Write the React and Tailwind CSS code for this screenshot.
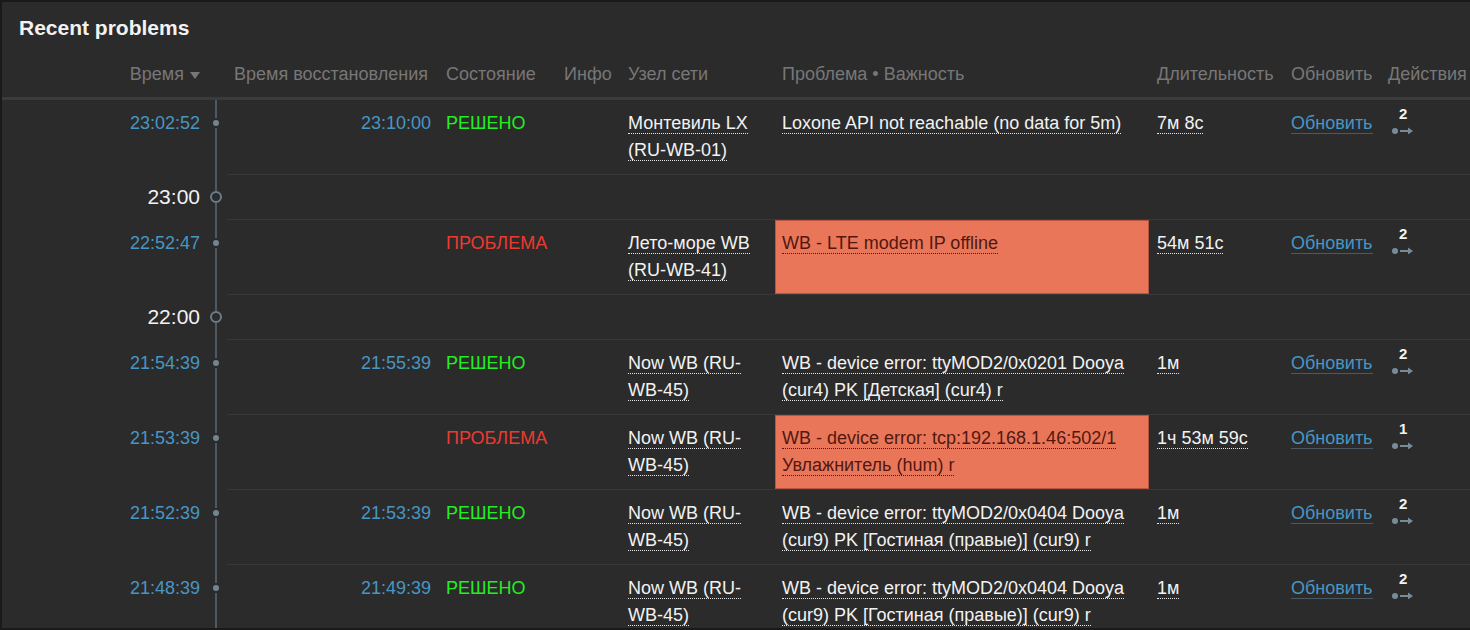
import React from "react";

const events = [
  {
    kind: "event",
    time: "23:02:52",
    recovery: "23:10:00",
    status: "ok",
    host: "Монтевиль LX (RU-WB-01)",
    problem: "Loxone API not reachable (no data for 5m)",
    duration: "7м 8с",
    actions: 2,
  },
  { kind: "hour", label: "23:00" },
  {
    kind: "event",
    time: "22:52:47",
    recovery: "",
    status: "problem",
    host: "Лето-море WB (RU-WB-41)",
    problem: "WB - LTE modem IP offline",
    duration: "54м 51с",
    actions: 2,
  },
  { kind: "hour", label: "22:00" },
  {
    kind: "event",
    time: "21:54:39",
    recovery: "21:55:39",
    status: "ok",
    host: "Now WB (RU-WB-45)",
    problem: "WB - device error: ttyMOD2/0x0201 Dooya (cur4) PK [Детская] (cur4) r",
    duration: "1м",
    actions: 2,
  },
  {
    kind: "event",
    time: "21:53:39",
    recovery: "",
    status: "problem",
    host: "Now WB (RU-WB-45)",
    problem: "WB - device error: tcp:192.168.1.46:502/1 Увлажнитель (hum) r",
    duration: "1ч 53м 59с",
    actions: 1,
  },
  {
    kind: "event",
    time: "21:52:39",
    recovery: "21:53:39",
    status: "ok",
    host: "Now WB (RU-WB-45)",
    problem: "WB - device error: ttyMOD2/0x0404 Dooya (cur9) PK [Гостиная (правые)] (cur9) r",
    duration: "1м",
    actions: 2,
  },
  {
    kind: "event",
    time: "21:48:39",
    recovery: "21:49:39",
    status: "ok",
    host: "Now WB (RU-WB-45)",
    problem: "WB - device error: ttyMOD2/0x0404 Dooya (cur9) PK [Гостиная (правые)] (cur9) r",
    duration: "1м",
    actions: 2,
  },
];

function Hint({ children, dark }) {
  return (
    <span
      className={
        dark
          ? "border-b border-dotted border-[#52180f]"
          : "border-b border-dotted border-[#e6e6e6]"
      }
    >
      {children}
    </span>
  );
}

function ActionIcon({ count }) {
  return (
    <span className="relative inline-block h-[24px] w-[26px]">
      <svg width="26" height="24" viewBox="0 0 26 24" className="block">
        <circle cx="4" cy="21" r="3" fill="#768d99" />
        <line x1="9" y1="21" x2="18" y2="21" stroke="#768d99" strokeWidth="2" />
        <polygon points="17,17.5 22,21 17,24.5" fill="#768d99" />
      </svg>
      <span className="absolute left-[8px] top-[-5px] text-[15px] font-bold leading-[18px] text-[#f2f2f2]">
        {count}
      </span>
    </span>
  );
}

function EventAxis() {
  return (
    <div className="flex w-[19px] shrink-0 flex-col items-center pr-[3px]">
      <div className="h-[18px] w-[2px] bg-[#4e5963]" />
      <div className="my-[2px] h-[6px] w-[6px] rounded-full bg-[#738590]" />
      <div className="w-[2px] flex-1 bg-[#4e5963]" />
    </div>
  );
}

function HourAxis() {
  return (
    <div className="flex w-[19px] shrink-0 flex-col items-center pr-[3px]">
      <div className="h-[16px] w-[2px] bg-[#4e5963]" />
      <div className="h-[12px] w-[12px] rounded-full border-2 border-[#6a7c88]" />
      <div className="w-[2px] flex-1 bg-[#4e5963]" />
    </div>
  );
}

function EventRow({ e }) {
  const red = e.status === "problem";
  return (
    <div className="flex">
      <div className="w-[206px] shrink-0 pr-[8px] pt-[10px] text-right text-[#4796c4]">
        {e.time}
      </div>
      <EventAxis />
      <div className="flex flex-1 border-b border-[#383838]">
        <div className="w-[212px] shrink-0 py-[10px] pl-[7px] pr-[8px] text-right text-[#4796c4]">
          {e.recovery}
        </div>
        <div
          className={
            "w-[118px] shrink-0 whitespace-nowrap py-[10px] pl-[7px] " +
            (red ? "text-[#ec3a30]" : "text-[#22ee22]")
          }
        >
          {red ? "ПРОБЛЕМА" : "РЕШЕНО"}
        </div>
        <div className="w-[63px] shrink-0 py-[10px] pl-[7px]" />
        <div className="w-[155px] shrink-0 py-[10px] pl-[8px] pr-[14px] text-[#f2f2f2]">
          <Hint>{e.host}</Hint>
        </div>
        <div
          className={
            "w-[374px] shrink-0 py-[10px] pl-[7px] pr-[8px] " +
            (red
              ? "bg-[#e97659] text-[#52180f] shadow-[inset_0_0_0_1px_rgba(90,30,20,0.35)]"
              : "text-[#f2f2f2]")
          }
        >
          <Hint dark={red}>{e.problem}</Hint>
        </div>
        <div className="w-[134px] shrink-0 whitespace-nowrap py-[10px] pl-[8px] text-[#f2f2f2]">
          <Hint>{e.duration}</Hint>
        </div>
        <div className="w-[98px] shrink-0 py-[10px] pl-[8px]">
          <span className="border-b border-[#4b5963] text-[#4796c4]">Обновить</span>
        </div>
        <div className="w-[120px] shrink-0 pl-[10px] pt-[10px]">
          <ActionIcon count={e.actions} />
        </div>
      </div>
    </div>
  );
}

function HourRow({ label }) {
  return (
    <div className="flex">
      <div className="w-[206px] shrink-0 pb-[10px] pr-[8px] pt-[8px] text-right text-[21px] text-[#f2f2f2]">
        {label}
      </div>
      <HourAxis />
      <div className="flex-1 border-b border-[#383838]" />
    </div>
  );
}

const headers = [
  ["w-[212px] pl-[7px]", "Время восстановления"],
  ["w-[118px] pl-[7px]", "Состояние"],
  ["w-[63px] pl-[7px]", "Инфо"],
  ["w-[155px] pl-[8px]", "Узел сети"],
  ["w-[374px] pl-[7px]", "Проблема • Важность"],
  ["w-[134px] pl-[8px]", "Длительность"],
  ["w-[98px] pl-[8px]", "Обновить"],
  ["w-[120px] pl-[7px]", "Действия"],
];

export default function App() {
  return (
    <div className="h-[630px] w-[1470px] overflow-hidden border-b-2 border-l-2 border-t-2 border-[#1a1a1a] bg-[#2b2b2b] font-['Liberation_Sans',Arial,sans-serif] text-[18px] leading-[27px]">
      <div className="h-[50px] px-[17px] pt-[13px] text-[21px] font-bold leading-[26px] text-[#f2f2f2]">
        Recent problems
      </div>

      <div className="flex border-b-[3px] border-[#3b3b3b] text-[#777777]">
        <div className="w-[206px] shrink-0 whitespace-nowrap py-[9px] pr-[8px] text-right">
          Время
          <span className="ml-[6px] inline-block border-x-[5px] border-t-[7px] border-x-transparent border-t-[#777777] align-middle" />
        </div>
        <div className="w-[19px] shrink-0" />
        {headers.map(([cls, text]) => (
          <div key={text} className={cls + " shrink-0 whitespace-nowrap py-[9px]"}>
            {text}
          </div>
        ))}
      </div>

      {events.map((e, i) =>
        e.kind === "hour" ? <HourRow key={i} label={e.label} /> : <EventRow key={i} e={e} />
      )}
    </div>
  );
}
